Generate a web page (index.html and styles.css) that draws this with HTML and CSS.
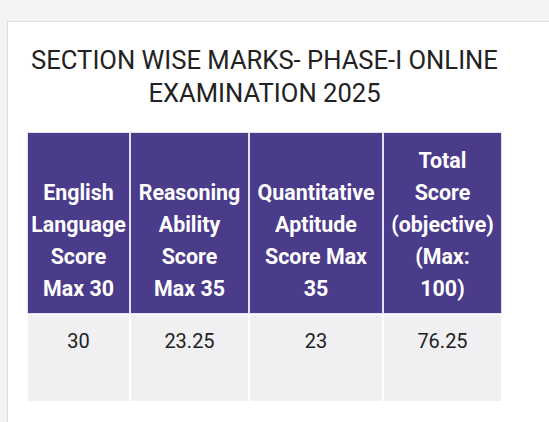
FILE: index.html
```html
<!DOCTYPE html>
<html lang="en">
<head>
<meta charset="utf-8">
<title>Section Wise Marks</title>
<link rel="stylesheet" href="styles.css">
</head>
<body>
<div class="card">
  <h2 class="title">SECTION WISE MARKS- PHASE-I ONLINE EXAMINATION 2025</h2>
  <table class="marks">
    <colgroup>
      <col class="c1"><col class="c2"><col class="c3"><col class="c4">
    </colgroup>
    <thead>
      <tr>
        <th>English<br>Language<br>Score<br>Max 30</th>
        <th>Reasoning<br>Ability<br>Score<br>Max 35</th>
        <th>Quantitative<br>Aptitude<br>Score Max<br>35</th>
        <th>Total<br>Score<br>(objective)<br>(Max:<br>100)</th>
      </tr>
    </thead>
    <tbody>
      <tr>
        <td>30</td>
        <td>23.25</td>
        <td>23</td>
        <td>76.25</td>
      </tr>
    </tbody>
  </table>
</div>
</body>
</html>
```
FILE: styles.css
```css
html, body {
  margin: 0;
  padding: 0;
}
body {
  background: #f3f3f3;
  font-family: Roboto, "Liberation Sans", Arial, sans-serif;
  overflow: hidden;
  height: 422px;
}
.card {
  margin: 21px 0 0 7px;
  width: 542px;
  height: 401px;
  background: #ffffff;
  border-top: 1px solid #dcdcdc;
  border-left: 1px solid #dcdcdc;
  padding: 22px 0 0 18px;
  box-sizing: border-box;
}
.title {
  width: 477px;
  margin: 0;
  text-align: center;
  font-size: 25.6px;
  line-height: 33px;
  font-weight: 400;
  color: #222222;
}
.marks {
  margin-top: 21px;
  border-collapse: separate;
  border-spacing: 2px;
  table-layout: fixed;
  width: 477px;
}
.c1 { width: 101px; }
.c2 { width: 117px; }
.c3 { width: 132px; }
.c4 { width: 117px; }
.marks th {
  background: #4b3b8b;
  color: #ffffff;
  font-weight: 700;
  font-size: 21.4px;
  line-height: 32px;
  height: 180px;
  box-sizing: border-box;
  padding: 0 2px 8px;
  vertical-align: bottom;
  text-align: center;
  white-space: nowrap;
  outline: 1px solid #e4dff2;
}
.marks td {
  background: #f0f0f2;
  color: #222222;
  font-size: 20px;
  line-height: 32px;
  height: 86px;
  box-sizing: border-box;
  padding: 10px 3px 0;
  vertical-align: top;
  text-align: center;
}
```
